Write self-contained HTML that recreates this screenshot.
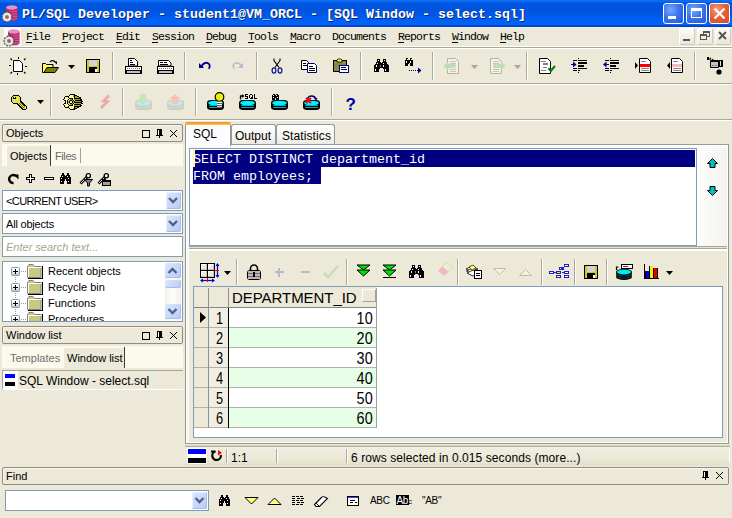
<!DOCTYPE html>
<html><head><meta charset="utf-8">
<style>
*{margin:0;padding:0;box-sizing:border-box}
html,body{width:732px;height:518px;overflow:hidden;background:#ECE9D8;font-family:"Liberation Sans",sans-serif;font-size:11px;color:#000}
.a{position:absolute;white-space:pre}
.mono{font-family:"Liberation Mono",monospace}
.t{position:absolute;white-space:pre;line-height:1}
</style></head><body>

<div class="a" style="left:0px;top:0px;width:732px;height:27px;background:linear-gradient(#0A6CF5 0px,#0A6CF5 1.5px,#0055DE 3px,#0053DC 6px,#0055E3 14px,#005EF4 18px,#0064FA 24.5px,#0A48D0 25.5px,#003CC4 27px);"></div>
<div class="a mono" style="left:22px;top:7px;font-size:13.34px;font-weight:bold;color:#fff;text-shadow:1px 1px 0 #0A246A;line-height:15px">PL/SQL Developer - student1@VM_ORCL - [SQL Window - select.sql]</div>
<div class="a" style="left:663px;top:3px;width:21px;height:21px;background:radial-gradient(circle at 35% 30%,#7AA8FA 0%,#3D75EE 45%,#2258DA 100%);border:1px solid #fff;border-radius:3px"></div>
<div class="a" style="left:668px;top:16px;width:8px;height:3px;background:#fff;"></div>
<div class="a" style="left:686px;top:3px;width:21px;height:21px;background:radial-gradient(circle at 35% 30%,#7AA8FA 0%,#3D75EE 45%,#2258DA 100%);border:1px solid #fff;border-radius:3px"></div>
<div class="a" style="left:691px;top:8px;width:11px;height:10px;background:transparent;border:1px solid #fff;border-top-width:3px"></div>
<div class="a" style="left:709px;top:3px;width:21px;height:21px;background:radial-gradient(circle at 35% 30%,#F2A080 0%,#E5603A 45%,#D04A22 100%);border:1px solid #fff;border-radius:3px"></div>
<div class="a" style="left:0px;top:27px;width:732px;height:1px;background:#F6F3E4;"></div>
<div class="a mono" style="left:26px;top:31px;font-size:11.5px;letter-spacing:-0.9px;line-height:12px">File</div>
<div class="a" style="left:26px;top:42px;width:6px;height:1px;background:#000;"></div>
<div class="a mono" style="left:62px;top:31px;font-size:11.5px;letter-spacing:-0.9px;line-height:12px">Project</div>
<div class="a" style="left:62px;top:42px;width:6px;height:1px;background:#000;"></div>
<div class="a mono" style="left:116px;top:31px;font-size:11.5px;letter-spacing:-0.9px;line-height:12px">Edit</div>
<div class="a" style="left:116px;top:42px;width:6px;height:1px;background:#000;"></div>
<div class="a mono" style="left:152px;top:31px;font-size:11.5px;letter-spacing:-0.9px;line-height:12px">Session</div>
<div class="a" style="left:152px;top:42px;width:6px;height:1px;background:#000;"></div>
<div class="a mono" style="left:206px;top:31px;font-size:11.5px;letter-spacing:-0.9px;line-height:12px">Debug</div>
<div class="a" style="left:206px;top:42px;width:6px;height:1px;background:#000;"></div>
<div class="a mono" style="left:248px;top:31px;font-size:11.5px;letter-spacing:-0.9px;line-height:12px">Tools</div>
<div class="a" style="left:248px;top:42px;width:6px;height:1px;background:#000;"></div>
<div class="a mono" style="left:290px;top:31px;font-size:11.5px;letter-spacing:-0.9px;line-height:12px">Macro</div>
<div class="a" style="left:290px;top:42px;width:6px;height:1px;background:#000;"></div>
<div class="a mono" style="left:332px;top:31px;font-size:11.5px;letter-spacing:-0.9px;line-height:12px">Documents</div>
<div class="a" style="left:338px;top:42px;width:6px;height:1px;background:#000;"></div>
<div class="a mono" style="left:398px;top:31px;font-size:11.5px;letter-spacing:-0.9px;line-height:12px">Reports</div>
<div class="a" style="left:398px;top:42px;width:6px;height:1px;background:#000;"></div>
<div class="a mono" style="left:452px;top:31px;font-size:11.5px;letter-spacing:-0.9px;line-height:12px">Window</div>
<div class="a" style="left:452px;top:42px;width:6px;height:1px;background:#000;"></div>
<div class="a mono" style="left:500px;top:31px;font-size:11.5px;letter-spacing:-0.9px;line-height:12px">Help</div>
<div class="a" style="left:500px;top:42px;width:6px;height:1px;background:#000;"></div>
<div class="a" style="left:679px;top:28px;width:16px;height:17px;background:linear-gradient(#FDFCF8,#E9E6D8);border:1px solid #fff;border-right-color:#CFCBBB;border-bottom-color:#CFCBBB;border-radius:2px"></div>
<div class="a" style="left:697px;top:28px;width:16px;height:17px;background:linear-gradient(#FDFCF8,#E9E6D8);border:1px solid #fff;border-right-color:#CFCBBB;border-bottom-color:#CFCBBB;border-radius:2px"></div>
<div class="a" style="left:715px;top:28px;width:16px;height:17px;background:linear-gradient(#FDFCF8,#E9E6D8);border:1px solid #fff;border-right-color:#CFCBBB;border-bottom-color:#CFCBBB;border-radius:2px"></div>
<div class="a" style="left:683px;top:39px;width:7px;height:2px;background:#555;"></div>
<div class="a" style="left:703px;top:31px;width:7px;height:6px;background:transparent;border:1px solid #555;border-top-width:2px"></div>
<div class="a" style="left:700px;top:34px;width:7px;height:6px;background:#F2F0E6;border:1px solid #555;border-top-width:2px"></div>
<div class="a" style="left:0px;top:46px;width:732px;height:1px;background:#fff;"></div>
<div class="a" style="left:0px;top:47px;width:732px;height:1px;background:#ACA899;"></div>
<div class="a" style="left:0px;top:48px;width:732px;height:1px;background:#fff;"></div>
<div class="a" style="left:0px;top:83px;width:732px;height:1px;background:#ACA899;"></div>
<div class="a" style="left:0px;top:84px;width:732px;height:1px;background:#fff;"></div>
<div class="a" style="left:0px;top:119px;width:732px;height:1px;background:#ACA899;"></div>
<div class="a" style="left:0px;top:120px;width:732px;height:1px;background:#fff;"></div>
<div class="a" style="left:112px;top:52px;width:1px;height:28px;background:#ACA899;"></div>
<div class="a" style="left:113px;top:52px;width:1px;height:28px;background:#fff;"></div>
<div class="a" style="left:184px;top:52px;width:1px;height:28px;background:#ACA899;"></div>
<div class="a" style="left:185px;top:52px;width:1px;height:28px;background:#fff;"></div>
<div class="a" style="left:256px;top:52px;width:1px;height:28px;background:#ACA899;"></div>
<div class="a" style="left:257px;top:52px;width:1px;height:28px;background:#fff;"></div>
<div class="a" style="left:360px;top:52px;width:1px;height:28px;background:#ACA899;"></div>
<div class="a" style="left:361px;top:52px;width:1px;height:28px;background:#fff;"></div>
<div class="a" style="left:432px;top:52px;width:1px;height:28px;background:#ACA899;"></div>
<div class="a" style="left:433px;top:52px;width:1px;height:28px;background:#fff;"></div>
<div class="a" style="left:526px;top:52px;width:1px;height:28px;background:#ACA899;"></div>
<div class="a" style="left:527px;top:52px;width:1px;height:28px;background:#fff;"></div>
<div class="a" style="left:694px;top:52px;width:1px;height:28px;background:#ACA899;"></div>
<div class="a" style="left:695px;top:52px;width:1px;height:28px;background:#fff;"></div>
<div class="a" style="left:50px;top:88px;width:1px;height:28px;background:#ACA899;"></div>
<div class="a" style="left:51px;top:88px;width:1px;height:28px;background:#fff;"></div>
<div class="a" style="left:122px;top:88px;width:1px;height:28px;background:#ACA899;"></div>
<div class="a" style="left:123px;top:88px;width:1px;height:28px;background:#fff;"></div>
<div class="a" style="left:195px;top:88px;width:1px;height:28px;background:#ACA899;"></div>
<div class="a" style="left:196px;top:88px;width:1px;height:28px;background:#fff;"></div>
<div class="a" style="left:331px;top:88px;width:1px;height:28px;background:#ACA899;"></div>
<div class="a" style="left:332px;top:88px;width:1px;height:28px;background:#fff;"></div>
<div class="a" style="left:2px;top:124px;width:181px;height:18px;background:#ECE9D8;border:1px solid #8F8D80;border-radius:2px;box-shadow:inset 1px 1px 0 #F8F6EE"></div>
<div class="t" style="left:6px;top:128px;font-size:11px;color:#000;">Objects</div>
<div class="a" style="left:2px;top:144px;width:181px;height:22px;background:#FCFAEC;"></div>
<div class="a" style="left:7px;top:146px;width:43px;height:20px;background:#ECE9D8;"></div>
<div class="a" style="left:50px;top:145px;width:1px;height:21px;background:#3C3C3C;"></div>
<div class="t" style="left:10px;top:151px;font-size:11px;color:#000;">Objects</div>
<div class="t" style="left:55px;top:151px;font-size:11px;color:#6A6A6A;letter-spacing:-0.4px">Files</div>
<div class="a" style="left:80px;top:148px;width:1px;height:15px;background:#A0A0A0;"></div>
<div class="a" style="left:2px;top:190px;width:181px;height:21px;background:#fff;border:1px solid #7F9DB9"></div>
<div class="a" style="left:166px;top:192px;width:15px;height:17px;background:linear-gradient(135deg,#DCE6FD,#B7CBF6);border-radius:2px;box-shadow:inset -1px -1px 0 #A8BDEB, inset 1px 1px 0 #EAF0FE"></div>
<div class="t" style="left:6px;top:196px;font-size:11px;color:#000;"><span style="letter-spacing:-0.6px">&lt;CURRENT USER&gt;</span></div>
<div class="a" style="left:2px;top:213px;width:181px;height:21px;background:#fff;border:1px solid #7F9DB9"></div>
<div class="a" style="left:166px;top:215px;width:15px;height:17px;background:linear-gradient(135deg,#DCE6FD,#B7CBF6);border-radius:2px;box-shadow:inset -1px -1px 0 #A8BDEB, inset 1px 1px 0 #EAF0FE"></div>
<div class="t" style="left:6px;top:219px;font-size:11px;color:#000;"><span style="letter-spacing:-0.2px">All objects</span></div>
<div class="a" style="left:2px;top:236px;width:181px;height:21px;background:#fff;border:1px solid #7F9DB9"></div>
<div class="t" style="left:6px;top:242px;font-size:11px;color:#A7A38E;font-style:italic;">Enter search text...</div>
<div class="a" style="left:2px;top:261px;width:181px;height:61px;background:#fff;border:1px solid #7F9DB9"></div>
<div class="a" style="left:3px;top:262px;width:162px;height:59px;overflow:hidden">
<div class="t" style="left:45px;top:4px;font-size:11px;color:#000;">Recent objects</div>
<div class="t" style="left:45px;top:20px;font-size:11px;color:#000;">Recycle bin</div>
<div class="t" style="left:45px;top:36px;font-size:11px;color:#000;">Functions</div>
<div class="t" style="left:45px;top:52px;font-size:11px;color:#000;">Procedures</div>
</div>
<div class="a" style="left:165px;top:263px;width:16px;height:57px;background:linear-gradient(90deg,#F3F1EC,#FDFDFB 50%,#F0EFE8);"></div>
<div class="a" style="left:165px;top:263px;width:16px;height:15px;background:linear-gradient(135deg,#DCE6FD,#B7CBF6);border-radius:2px;box-shadow:inset -1px -1px 0 #A8BDEB"></div>
<div class="a" style="left:165px;top:280px;width:16px;height:8px;background:linear-gradient(135deg,#DCE6FD,#B7CBF6);border-radius:2px;box-shadow:inset -1px -1px 0 #A8BDEB"></div>
<div class="a" style="left:165px;top:304px;width:16px;height:15px;background:linear-gradient(135deg,#DCE6FD,#B7CBF6);border-radius:2px;box-shadow:inset -1px -1px 0 #A8BDEB"></div>
<div class="a" style="left:2px;top:326px;width:181px;height:18px;background:#ECE9D8;border:1px solid #8F8D80;border-radius:2px;box-shadow:inset 1px 1px 0 #F8F6EE"></div>
<div class="t" style="left:6px;top:330px;font-size:11px;color:#000;">Window list</div>
<div class="a" style="left:2px;top:346px;width:181px;height:22px;background:#FCFAEC;"></div>
<div class="a" style="left:64px;top:348px;width:60px;height:20px;background:#ECE9D8;"></div>
<div class="a" style="left:124px;top:347px;width:1px;height:21px;background:#3C3C3C;"></div>
<div class="t" style="left:10px;top:353px;font-size:11px;color:#707070;">Templates</div>
<div class="t" style="left:67px;top:353px;font-size:11px;color:#000;">Window list</div>
<div class="a" style="left:2px;top:370px;width:181px;height:20px;background:#ECE9D8;border-top:1px solid #A8A595;border-left:1px solid #A8A595;border-bottom:1px solid #fff"></div>
<div class="a" style="left:3px;top:371px;width:15px;height:18px;background:#fff;"></div>
<div class="t" style="left:19px;top:375px;font-size:12px;color:#000;">SQL Window - select.sql</div>
<div class="a" style="left:231px;top:124px;width:45px;height:21px;background:linear-gradient(#FFFFFF,#F3F2EC 70%,#E9E8E0);border:1px solid #919B9C;border-bottom:none;border-radius:3px 3px 0 0"></div>
<div class="a" style="left:276px;top:124px;width:59px;height:21px;background:linear-gradient(#FFFFFF,#F3F2EC 70%,#E9E8E0);border:1px solid #919B9C;border-bottom:none;border-radius:3px 3px 0 0"></div>
<div class="a" style="left:185px;top:144px;width:544px;height:300px;background:#F9F9FA;border:1px solid #919B9C;box-shadow:inset 1px 1px 0 #fff, inset -1px -1px 0 #fff"></div>
<div class="a" style="left:189px;top:251px;width:538px;height:191px;background:#ECE9D8;"></div>
<div class="a" style="left:185px;top:122px;width:46px;height:24px;background:#FCFCFE;border:1px solid #919B9C;border-bottom:none;border-radius:3px 3px 0 0"></div>
<div class="a" style="left:185px;top:122px;width:46px;height:3px;background:linear-gradient(#E68B2C,#FFC73C);border-radius:3px 3px 0 0"></div>
<div class="t" style="left:193px;top:128px;font-size:12px;color:#000;">SQL</div>
<div class="t" style="left:235px;top:130px;font-size:12px;color:#000;">Output</div>
<div class="t" style="left:282px;top:130px;font-size:12px;color:#000;letter-spacing:0.1px">Statistics</div>
<div class="a" style="left:189px;top:148px;width:508px;height:98px;background:#fff;border:1px solid #7F9DB9"></div>
<div class="a" style="left:697px;top:148px;width:30px;height:98px;background:linear-gradient(90deg,#FDFDFC,#F3F2EE);"></div>
<div class="a" style="left:193px;top:150px;width:502px;height:17px;background:#000080;"></div>
<div class="a" style="left:193px;top:167px;width:128px;height:17px;background:#000080;"></div>
<div class="a" style="left:193px;top:150px;width:2px;height:17px;background:#FFFF80;"></div>
<div class="a mono" style="left:193px;top:151px;font-size:13.34px;line-height:17px;color:#fff">SELECT DISTINCT department_id
FROM employees;</div>
<div class="a" style="left:189px;top:246px;width:538px;height:1px;background:#A9A593;"></div>
<div class="a" style="left:189px;top:247px;width:538px;height:1px;background:#E4E2D6;"></div>
<div class="a" style="left:189px;top:248px;width:538px;height:1px;background:#A9A593;"></div>
<div class="a" style="left:189px;top:249px;width:538px;height:2px;background:#fff;"></div>
<div class="a" style="left:193px;top:286px;width:530px;height:152px;background:#fff;border:1px solid #7F9DB9"></div>
<div class="a" style="left:194px;top:287px;width:183px;height:21px;background:#ECE9D8;"></div>
<div class="a" style="left:194px;top:308px;width:35px;height:120px;background:#ECE9D8;"></div>
<div class="a" style="left:209px;top:308px;width:19px;height:120px;background:#F1EFE4;"></div>
<div class="a" style="left:229px;top:308px;width:147px;height:19px;background:#fff;"></div>
<div class="a" style="left:194px;top:327px;width:183px;height:1px;background:#B0B0B0;"></div>
<div class="t" style="left:210px;width:19px;text-align:center;top:311px;font-size:16px;transform:scaleX(0.8)">1</div>
<div class="t" style="left:229px;width:144px;text-align:right;top:311px;font-size:16px;transform:scaleX(0.9);transform-origin:100% 0;letter-spacing:0.3px">10</div>
<div class="a" style="left:229px;top:328px;width:147px;height:19px;background:#E6FFE6;"></div>
<div class="a" style="left:194px;top:347px;width:183px;height:1px;background:#B0B0B0;"></div>
<div class="t" style="left:210px;width:19px;text-align:center;top:331px;font-size:16px;transform:scaleX(0.8)">2</div>
<div class="t" style="left:229px;width:144px;text-align:right;top:331px;font-size:16px;transform:scaleX(0.9);transform-origin:100% 0;letter-spacing:0.3px">20</div>
<div class="a" style="left:229px;top:348px;width:147px;height:19px;background:#fff;"></div>
<div class="a" style="left:194px;top:367px;width:183px;height:1px;background:#B0B0B0;"></div>
<div class="t" style="left:210px;width:19px;text-align:center;top:351px;font-size:16px;transform:scaleX(0.8)">3</div>
<div class="t" style="left:229px;width:144px;text-align:right;top:351px;font-size:16px;transform:scaleX(0.9);transform-origin:100% 0;letter-spacing:0.3px">30</div>
<div class="a" style="left:229px;top:368px;width:147px;height:19px;background:#E6FFE6;"></div>
<div class="a" style="left:194px;top:387px;width:183px;height:1px;background:#B0B0B0;"></div>
<div class="t" style="left:210px;width:19px;text-align:center;top:371px;font-size:16px;transform:scaleX(0.8)">4</div>
<div class="t" style="left:229px;width:144px;text-align:right;top:371px;font-size:16px;transform:scaleX(0.9);transform-origin:100% 0;letter-spacing:0.3px">40</div>
<div class="a" style="left:229px;top:388px;width:147px;height:19px;background:#fff;"></div>
<div class="a" style="left:194px;top:407px;width:183px;height:1px;background:#B0B0B0;"></div>
<div class="t" style="left:210px;width:19px;text-align:center;top:391px;font-size:16px;transform:scaleX(0.8)">5</div>
<div class="t" style="left:229px;width:144px;text-align:right;top:391px;font-size:16px;transform:scaleX(0.9);transform-origin:100% 0;letter-spacing:0.3px">50</div>
<div class="a" style="left:229px;top:408px;width:147px;height:19px;background:#E6FFE6;"></div>
<div class="a" style="left:194px;top:427px;width:183px;height:1px;background:#B0B0B0;"></div>
<div class="t" style="left:210px;width:19px;text-align:center;top:411px;font-size:16px;transform:scaleX(0.8)">6</div>
<div class="t" style="left:229px;width:144px;text-align:right;top:411px;font-size:16px;transform:scaleX(0.9);transform-origin:100% 0;letter-spacing:0.3px">60</div>
<div class="a" style="left:194px;top:307px;width:183px;height:1px;background:#858585;"></div>
<div class="a" style="left:208px;top:288px;width:1px;height:140px;background:#909090;"></div>
<div class="a" style="left:228px;top:288px;width:1px;height:20px;background:#909090;"></div>
<div class="a" style="left:228px;top:308px;width:1px;height:120px;background:#000;"></div>
<div class="a" style="left:376px;top:288px;width:1px;height:140px;background:#A0A0A0;"></div>
<div class="a" style="left:362px;top:289px;width:14px;height:13px;background:#ECE9D8;border:1px solid;border-color:#fff #A0A0A0 #A0A0A0 #fff"></div>
<div class="t" style="left:232px;top:290px;font-size:15px;color:#000;letter-spacing:-0.05px">DEPARTMENT_ID</div>
<div class="a" style="left:185px;top:445px;width:545px;height:1px;background:#D6D3C2;"></div>
<div class="a" style="left:185px;top:446px;width:545px;height:1px;background:#B8B4A2;"></div>
<div class="a" style="left:185px;top:447px;width:545px;height:19px;background:linear-gradient(#F0EEE2,#ECE9D8 60%,#E2DFCC);"></div>
<div class="a" style="left:226px;top:449px;width:1px;height:14px;background:#ACA899;"></div>
<div class="a" style="left:227px;top:449px;width:1px;height:14px;background:#fff;"></div>
<div class="a" style="left:276px;top:449px;width:1px;height:14px;background:#ACA899;"></div>
<div class="a" style="left:277px;top:449px;width:1px;height:14px;background:#fff;"></div>
<div class="a" style="left:346px;top:449px;width:1px;height:14px;background:#ACA899;"></div>
<div class="a" style="left:347px;top:449px;width:1px;height:14px;background:#fff;"></div>
<div class="a" style="left:729px;top:449px;width:1px;height:14px;background:#fff;"></div>
<div class="t" style="left:231px;top:452px;font-size:12px;color:#000;">1:1</div>
<div class="t" style="left:351px;top:452px;font-size:12px;color:#000;letter-spacing:0.08px">6 rows selected in 0.015 seconds (more...)</div>
<div class="a" style="left:187px;top:448px;width:20px;height:16px;background:#fff;"></div>
<div class="a" style="left:188px;top:449px;width:18px;height:5px;background:#0000FF;"></div>
<div class="a" style="left:188px;top:458px;width:18px;height:5px;background:#000;"></div>
<div class="a" style="left:2px;top:467px;width:727px;height:18px;background:#ECE9D8;border:1px solid #8F8D80;border-radius:2px;box-shadow:inset 1px 1px 0 #F8F6EE"></div>
<div class="t" style="left:6px;top:471px;font-size:11px;color:#000;">Find</div>
<div class="a" style="left:5px;top:490px;width:204px;height:21px;background:#fff;border:1px solid #7F9DB9"></div>
<div class="a" style="left:192px;top:492px;width:15px;height:17px;background:linear-gradient(135deg,#DCE6FD,#B7CBF6);border-radius:2px;box-shadow:inset -1px -1px 0 #A8BDEB, inset 1px 1px 0 #EAF0FE"></div>
<div class="t" style="left:9px;top:496px;font-size:11px;color:#000;"></div>
<svg class="a" style="left:0;top:0" width="732" height="518" viewBox="0 0 732 518"><path d="M13.5 60.5H19.5L22.5 63.5V71.5H13.5Z" fill="#fff" stroke="#000" stroke-width="1" /><rect x="18" y="57" width="1" height="2" fill="#000"/><rect x="17" y="73" width="1" height="2" fill="#000"/><rect x="9" y="65" width="2" height="1" fill="#000"/><rect x="25" y="66" width="2" height="1" fill="#000"/><path d="M10.5 58.5l1.5 1.5M25.5 58.5l-1.5 1.5M10.5 73.5l1.5 -1.5M25.5 73.5l-1.5 -1.5" fill="none" stroke="#000" stroke-width="1.2" /><path d="M42.5 63.5h3l1 1h6.5v8h-10.5z" fill="#FFFF60" stroke="#000" stroke-width="1" /><path d="M44 72.5l3-5h11.5l-3.5 5z" fill="#808000" stroke="#000" stroke-width="1" /><path d="M50 62c1-2 4-2 5.5 0.5" fill="none" stroke="#000" stroke-width="1.2" /><path d="M54 61.5h3v3z" fill="#000" stroke="none" stroke-width="1" /><path d="M68 65h7l-3.5 4z" fill="#000" stroke="none" stroke-width="1" /><rect x="86" y="59" width="14" height="14" fill="#000"/><rect x="87" y="60" width="2" height="12" fill="#C8C830"/><rect x="97" y="60" width="2" height="12" fill="#C8C830"/><rect x="89" y="60" width="8" height="6" fill="#D8D0D0"/><rect x="89" y="66" width="8" height="1" fill="#C8C830"/><rect x="95" y="69" width="2" height="3" fill="#fff"/><rect x="98" y="60" width="1" height="1" fill="#fff"/><path d="M128.5 58.5h6l3 3v4.5h-9z" fill="#fff" stroke="#000" stroke-width="1" /><rect x="130" y="60" width="2" height="1" fill="#000"/><rect x="130" y="62" width="3" height="1" fill="#000"/><rect x="130" y="64" width="5" height="1" fill="#000"/><rect x="125" y="66" width="17" height="8" fill="#000"/><rect x="126" y="67" width="15" height="3" fill="#fff"/><rect x="127" y="68" width="1" height="1" fill="#777"/><rect x="129" y="68" width="1" height="1" fill="#777"/><rect x="131" y="68" width="1" height="1" fill="#777"/><rect x="133" y="68" width="1" height="1" fill="#777"/><rect x="135" y="68" width="1" height="1" fill="#777"/><rect x="137" y="68" width="1" height="1" fill="#777"/><rect x="139" y="68" width="1" height="1" fill="#777"/><rect x="139" y="68" width="1" height="1" fill="#f00"/><rect x="127" y="71" width="13" height="2" fill="#C0C0C0"/><path d="M158.5 60.5h10l2.5 2.5v3h-12.5z" fill="#fff" stroke="#000" stroke-width="1" /><rect x="160" y="62" width="3" height="1" fill="#000"/><rect x="164" y="62" width="3" height="1" fill="#000"/><rect x="160" y="64" width="8" height="1" fill="#000"/><rect x="157" y="66" width="17" height="8" fill="#000"/><rect x="158" y="67" width="15" height="3" fill="#fff"/><rect x="159" y="68" width="1" height="1" fill="#777"/><rect x="161" y="68" width="1" height="1" fill="#777"/><rect x="163" y="68" width="1" height="1" fill="#777"/><rect x="165" y="68" width="1" height="1" fill="#777"/><rect x="167" y="68" width="1" height="1" fill="#777"/><rect x="169" y="68" width="1" height="1" fill="#777"/><rect x="171" y="68" width="1" height="1" fill="#777"/><rect x="171" y="68" width="1" height="1" fill="#f00"/><rect x="159" y="71" width="13" height="2" fill="#C0C0C0"/><path d="M201.5 67.5C202 63 207 61.5 209 64 210.5 66 209.5 68 208.5 68.5" fill="none" stroke="#000080" stroke-width="1.8" /><path d="M199 63v5h5z" fill="#000080" stroke="none" stroke-width="1" /><path d="M241.5 67.5C241 63 236 61.5 234 64 232.5 66 233.5 68 234.5 68.5" fill="none" stroke="#B8B8C8" stroke-width="1.6" /><path d="M243 63v5h-5z" fill="#B8B8C8" stroke="none" stroke-width="1" /><path d="M274 58.5v2l5 7M280 58.5v2l-5 7" fill="none" stroke="#000" stroke-width="1.1" /><ellipse cx="274" cy="70.5" rx="1.9" ry="2.6" fill="none" stroke="#1010A0" stroke-width="1.2"/><ellipse cx="280" cy="70.5" rx="1.9" ry="2.6" fill="none" stroke="#1010A0" stroke-width="1.2"/><path d="M301.5 60.5H306.5L308.5 62.5V69.5H301.5Z" fill="#fff" stroke="#000" stroke-width="1" /><rect x="303" y="63" width="3" height="1" fill="#000"/><rect x="303" y="65" width="4" height="1" fill="#000"/><path d="M307.5 63.5H314.5L316.5 65.5V72.5H307.5Z" fill="#fff" stroke="#000080" stroke-width="1" /><rect x="309" y="66" width="4" height="1" fill="#000"/><rect x="309" y="68" width="6" height="1" fill="#000"/><rect x="309" y="70" width="6" height="1" fill="#000"/><rect x="333" y="60" width="14" height="12" fill="#000"/><rect x="334" y="61" width="12" height="10" fill="#8C8A40"/><path d="M337 62v-2l1-1h3l1 1v2z" fill="#FFFF40" stroke="#000" stroke-width="0.8" /><rect x="339" y="65" width="10" height="8" fill="#000080"/><rect x="340" y="66" width="8" height="6" fill="#fff"/><rect x="341" y="67" width="5" height="1" fill="#000080"/><rect x="341" y="69" width="6" height="1" fill="#000080"/><rect x="377" y="59" width="3" height="1" fill="#000"/><rect x="383" y="59" width="3" height="1" fill="#000"/><rect x="377" y="60" width="1" height="1" fill="#000"/><rect x="378" y="60" width="1" height="1" fill="#fff"/><rect x="379" y="60" width="1" height="1" fill="#000"/><rect x="383" y="60" width="1" height="1" fill="#000"/><rect x="384" y="60" width="1" height="1" fill="#fff"/><rect x="385" y="60" width="1" height="1" fill="#000"/><rect x="377" y="61" width="3" height="1" fill="#000"/><rect x="383" y="61" width="3" height="1" fill="#000"/><rect x="376" y="62" width="5" height="1" fill="#000"/><rect x="382" y="62" width="5" height="1" fill="#000"/><rect x="376" y="63" width="1" height="1" fill="#000"/><rect x="377" y="63" width="1" height="1" fill="#fff"/><rect x="378" y="63" width="5" height="1" fill="#000"/><rect x="383" y="63" width="1" height="1" fill="#fff"/><rect x="384" y="63" width="3" height="1" fill="#000"/><rect x="375" y="64" width="13" height="1" fill="#000"/><rect x="374" y="65" width="2" height="1" fill="#000"/><rect x="376" y="65" width="1" height="1" fill="#fff"/><rect x="377" y="65" width="3" height="1" fill="#000"/><rect x="380" y="65" width="1" height="1" fill="#888"/><rect x="381" y="65" width="2" height="1" fill="#000"/><rect x="383" y="65" width="1" height="1" fill="#fff"/><rect x="384" y="65" width="5" height="1" fill="#000"/><rect x="374" y="66" width="2" height="1" fill="#000"/><rect x="376" y="66" width="1" height="1" fill="#fff"/><rect x="377" y="66" width="3" height="1" fill="#000"/><rect x="380" y="66" width="1" height="1" fill="#888"/><rect x="381" y="66" width="2" height="1" fill="#000"/><rect x="383" y="66" width="1" height="1" fill="#fff"/><rect x="384" y="66" width="5" height="1" fill="#000"/><rect x="374" y="67" width="15" height="1" fill="#000"/><rect x="374" y="68" width="6" height="1" fill="#000"/><rect x="383" y="68" width="6" height="1" fill="#000"/><rect x="374" y="69" width="1" height="1" fill="#000"/><rect x="375" y="69" width="1" height="1" fill="#fff"/><rect x="376" y="69" width="3" height="1" fill="#000"/><rect x="384" y="69" width="1" height="1" fill="#000"/><rect x="385" y="69" width="1" height="1" fill="#fff"/><rect x="386" y="69" width="3" height="1" fill="#000"/><rect x="374" y="70" width="1" height="1" fill="#000"/><rect x="375" y="70" width="1" height="1" fill="#fff"/><rect x="376" y="70" width="3" height="1" fill="#000"/><rect x="384" y="70" width="1" height="1" fill="#000"/><rect x="385" y="70" width="1" height="1" fill="#fff"/><rect x="386" y="70" width="3" height="1" fill="#000"/><rect x="374" y="71" width="5" height="1" fill="#000"/><rect x="384" y="71" width="5" height="1" fill="#000"/><rect x="406" y="58" width="2" height="1" fill="#000"/><rect x="410" y="58" width="2" height="1" fill="#000"/><rect x="406" y="59" width="1" height="1" fill="#000"/><rect x="407" y="59" width="1" height="1" fill="#fff"/><rect x="410" y="59" width="1" height="1" fill="#000"/><rect x="411" y="59" width="1" height="1" fill="#fff"/><rect x="405" y="60" width="8" height="1" fill="#000"/><rect x="405" y="61" width="1" height="1" fill="#000"/><rect x="406" y="61" width="1" height="1" fill="#fff"/><rect x="407" y="61" width="3" height="1" fill="#000"/><rect x="410" y="61" width="1" height="1" fill="#fff"/><rect x="411" y="61" width="2" height="1" fill="#000"/><rect x="405" y="62" width="1" height="1" fill="#000"/><rect x="406" y="62" width="1" height="1" fill="#fff"/><rect x="407" y="62" width="3" height="1" fill="#000"/><rect x="410" y="62" width="1" height="1" fill="#fff"/><rect x="411" y="62" width="2" height="1" fill="#000"/><rect x="405" y="63" width="4" height="1" fill="#000"/><rect x="410" y="63" width="3" height="1" fill="#000"/><rect x="405" y="64" width="3" height="1" fill="#000"/><rect x="410" y="64" width="3" height="1" fill="#000"/><rect x="405" y="65" width="3" height="1" fill="#000"/><rect x="410" y="65" width="3" height="1" fill="#000"/><rect x="409" y="70" width="1" height="1" fill="#000080"/><rect x="411" y="70" width="1" height="1" fill="#000080"/><rect x="413" y="70" width="1" height="1" fill="#000080"/><rect x="415" y="70" width="1" height="1" fill="#000080"/><rect x="417" y="70" width="4" height="1" fill="#000080"/><path d="M418 67.5l3.5 3 -3.5 3z" fill="#000080" stroke="none" stroke-width="1" /><path d="M447.5 58.5h8l3 3v12h-11z" fill="#F4F2EA" stroke="#B5B19E" stroke-width="1" /><rect x="450" y="61" width="6" height="1" fill="#C8C4B2"/><rect x="450" y="63" width="6" height="1" fill="#C8C4B2"/><rect x="450" y="65" width="6" height="1" fill="#C8C4B2"/><rect x="450" y="69" width="6" height="1" fill="#C8C4B2"/><rect x="450" y="71" width="6" height="1" fill="#C8C4B2"/><path d="M443.5 66l5-5v3h7v4h-7v3z" fill="#BFDDB4" stroke="none" stroke-width="1" /><path d="M490.5 58.5h8l3 3v12h-11z" fill="#F4F2EA" stroke="#B5B19E" stroke-width="1" /><rect x="493" y="61" width="6" height="1" fill="#C8C4B2"/><rect x="493" y="63" width="6" height="1" fill="#C8C4B2"/><rect x="493" y="65" width="6" height="1" fill="#C8C4B2"/><rect x="493" y="69" width="6" height="1" fill="#C8C4B2"/><rect x="493" y="71" width="6" height="1" fill="#C8C4B2"/><path d="M505.5 66l-5-5v3h-7v4h7v3z" fill="#BFDDB4" stroke="none" stroke-width="1" /><path d="M471 65h7l-3.5 4z" fill="#A9A594" stroke="none" stroke-width="1" /><path d="M514 65h7l-3.5 4z" fill="#A9A594" stroke="none" stroke-width="1" /><path d="M539.5 58.5H547.5L550.5 61.5V73.5H539.5Z" fill="#fff" stroke="#000" stroke-width="1" /><rect x="541" y="61" width="5" height="1" fill="#808080"/><rect x="543" y="63" width="5" height="1" fill="#808080"/><rect x="543" y="64" width="5" height="1" fill="#808080"/><rect x="543" y="67" width="4" height="1" fill="#808080"/><rect x="541" y="70" width="5" height="1" fill="#808080"/><path d="M548.3 68.3l2.5 2.7 4.2-5" fill="none" stroke="#008000" stroke-width="2" /><rect x="578" y="58" width="1" height="1" fill="#000"/><rect x="578" y="72" width="1" height="1" fill="#000"/><rect x="573" y="60" width="4" height="1" fill="#000"/><rect x="578" y="60" width="9" height="1" fill="#000"/><rect x="578" y="62" width="9" height="2" fill="#000"/><rect x="578" y="65" width="6" height="2" fill="#000"/><rect x="573" y="68" width="4" height="1" fill="#000"/><rect x="578" y="68" width="9" height="1" fill="#000"/><rect x="573" y="70" width="4" height="1" fill="#000"/><rect x="578" y="70" width="2" height="1" fill="#000"/><rect x="571" y="64" width="3" height="1" fill="#000080"/><path d="M573 61.5l3.5 3 -3.5 3z" fill="#000080" stroke="none" stroke-width="1" /><rect x="610" y="58" width="1" height="1" fill="#000"/><rect x="610" y="72" width="1" height="1" fill="#000"/><rect x="605" y="60" width="4" height="1" fill="#000"/><rect x="610" y="60" width="9" height="1" fill="#000"/><rect x="610" y="62" width="9" height="2" fill="#000"/><rect x="610" y="65" width="6" height="2" fill="#000"/><rect x="605" y="68" width="4" height="1" fill="#000"/><rect x="610" y="68" width="9" height="1" fill="#000"/><rect x="605" y="70" width="4" height="1" fill="#000"/><rect x="610" y="70" width="2" height="1" fill="#000"/><rect x="606" y="64" width="3" height="1" fill="#000080"/><path d="M606.5 61.5l-3.5 3 3.5 3z" fill="#000080" stroke="none" stroke-width="1" /><path d="M639.5 58.5H647.5L650.5 61.5V72.5H639.5Z" fill="#fff" stroke="#000" stroke-width="1" /><rect x="641" y="61" width="5" height="1" fill="#888"/><rect x="640" y="64" width="10" height="3" fill="#FF0000"/><rect x="641" y="68" width="8" height="1" fill="#888"/><rect x="641" y="70" width="8" height="1" fill="#888"/><path d="M635 62l3 3.5 -3 3.5z" fill="#000" stroke="none" stroke-width="1" /><path d="M671.5 58.5H679.5L682.5 61.5V72.5H671.5Z" fill="#fff" stroke="#000" stroke-width="1" /><rect x="673" y="61" width="5" height="1" fill="#888"/><rect x="672" y="64" width="10" height="3" fill="#F4BBBB"/><rect x="673" y="68" width="8" height="1" fill="#888"/><rect x="673" y="70" width="8" height="1" fill="#888"/><path d="M670 62l-3 3.5 3 3.5z" fill="#000" stroke="none" stroke-width="1" /><rect x="707" y="57" width="2" height="3" fill="#000"/><path d="M709.5 58.5l7 3.5" fill="none" stroke="#000" stroke-width="2" stroke-dasharray="1.5 1"/><rect x="710" y="60" width="9" height="8" rx="1" fill="#000"/><rect x="711" y="62" width="7" height="5" fill="#C4C4C4"/><rect x="712" y="65" width="2" height="1" fill="#808080"/><rect x="715" y="65" width="2" height="1" fill="#808080"/><rect x="719" y="60" width="4" height="7" fill="#000"/><rect x="720" y="61" width="1" height="5" fill="#E0E0E0"/><circle cx="719" cy="72" r="2.6" fill="#000"/><rect x="13" y="95" width="6" height="1" fill="#000"/><rect x="12" y="96" width="1" height="1" fill="#000"/><rect x="13" y="96" width="6" height="1" fill="#E4E450"/><rect x="19" y="96" width="1" height="1" fill="#000"/><rect x="11" y="97" width="1" height="1" fill="#000"/><rect x="12" y="97" width="1" height="1" fill="#E4E450"/><rect x="13" y="97" width="1" height="1" fill="#000"/><rect x="14" y="97" width="1" height="1" fill="#fff"/><rect x="15" y="97" width="1" height="1" fill="#000"/><rect x="16" y="97" width="4" height="1" fill="#E4E450"/><rect x="20" y="97" width="1" height="1" fill="#000"/><rect x="11" y="98" width="1" height="1" fill="#000"/><rect x="12" y="98" width="1" height="1" fill="#E4E450"/><rect x="13" y="98" width="3" height="1" fill="#000"/><rect x="16" y="98" width="4" height="1" fill="#E4E450"/><rect x="20" y="98" width="1" height="1" fill="#000"/><rect x="11" y="99" width="1" height="1" fill="#000"/><rect x="12" y="99" width="8" height="1" fill="#E4E450"/><rect x="20" y="99" width="1" height="1" fill="#000"/><rect x="11" y="100" width="1" height="1" fill="#000"/><rect x="12" y="100" width="8" height="1" fill="#E4E450"/><rect x="20" y="100" width="1" height="1" fill="#000"/><rect x="11" y="101" width="1" height="1" fill="#000"/><rect x="12" y="101" width="8" height="1" fill="#E4E450"/><rect x="20" y="101" width="2" height="1" fill="#000"/><rect x="12" y="102" width="1" height="1" fill="#000"/><rect x="13" y="102" width="7" height="1" fill="#E4E450"/><rect x="20" y="102" width="1" height="1" fill="#6A6A10"/><rect x="21" y="102" width="2" height="1" fill="#000"/><rect x="13" y="103" width="5" height="1" fill="#000"/><rect x="18" y="103" width="1" height="1" fill="#E4E450"/><rect x="19" y="103" width="1" height="1" fill="#6A6A10"/><rect x="20" y="103" width="1" height="1" fill="#E4E450"/><rect x="21" y="103" width="1" height="1" fill="#6A6A10"/><rect x="22" y="103" width="2" height="1" fill="#000"/><rect x="17" y="104" width="2" height="1" fill="#000"/><rect x="19" y="104" width="1" height="1" fill="#E4E450"/><rect x="20" y="104" width="1" height="1" fill="#6A6A10"/><rect x="21" y="104" width="1" height="1" fill="#E4E450"/><rect x="22" y="104" width="1" height="1" fill="#6A6A10"/><rect x="23" y="104" width="2" height="1" fill="#000"/><rect x="18" y="105" width="2" height="1" fill="#000"/><rect x="20" y="105" width="1" height="1" fill="#E4E450"/><rect x="21" y="105" width="1" height="1" fill="#6A6A10"/><rect x="22" y="105" width="1" height="1" fill="#E4E450"/><rect x="23" y="105" width="1" height="1" fill="#6A6A10"/><rect x="24" y="105" width="2" height="1" fill="#000"/><rect x="19" y="106" width="2" height="1" fill="#000"/><rect x="21" y="106" width="1" height="1" fill="#E4E450"/><rect x="22" y="106" width="1" height="1" fill="#6A6A10"/><rect x="23" y="106" width="1" height="1" fill="#E4E450"/><rect x="24" y="106" width="1" height="1" fill="#6A6A10"/><rect x="25" y="106" width="1" height="1" fill="#E4E450"/><rect x="26" y="106" width="1" height="1" fill="#000"/><rect x="20" y="107" width="2" height="1" fill="#000"/><rect x="22" y="107" width="1" height="1" fill="#E4E450"/><rect x="23" y="107" width="1" height="1" fill="#6A6A10"/><rect x="24" y="107" width="2" height="1" fill="#E4E450"/><rect x="26" y="107" width="1" height="1" fill="#000"/><rect x="21" y="108" width="2" height="1" fill="#000"/><rect x="23" y="108" width="3" height="1" fill="#E4E450"/><rect x="26" y="108" width="1" height="1" fill="#000"/><rect x="22" y="109" width="4" height="1" fill="#000"/><path d="M37 100h7l-3.5 4z" fill="#000" stroke="none" stroke-width="1" /><rect x="70" y="94" width="5" height="1" fill="#000"/><rect x="69" y="95" width="1" height="1" fill="#000"/><rect x="70" y="95" width="3" height="1" fill="#FFFF9A"/><rect x="73" y="95" width="1" height="1" fill="#A0A030"/><rect x="74" y="95" width="3" height="1" fill="#000"/><rect x="65" y="96" width="4" height="1" fill="#000"/><rect x="69" y="96" width="4" height="1" fill="#FFFF9A"/><rect x="73" y="96" width="1" height="1" fill="#A0A030"/><rect x="74" y="96" width="1" height="1" fill="#000"/><rect x="75" y="96" width="2" height="1" fill="#A0A030"/><rect x="77" y="96" width="2" height="1" fill="#000"/><rect x="64" y="97" width="1" height="1" fill="#000"/><rect x="65" y="97" width="3" height="1" fill="#FFFF9A"/><rect x="68" y="97" width="1" height="1" fill="#000"/><rect x="69" y="97" width="5" height="1" fill="#FFFF9A"/><rect x="74" y="97" width="1" height="1" fill="#000"/><rect x="75" y="97" width="4" height="1" fill="#A0A030"/><rect x="79" y="97" width="2" height="1" fill="#000"/><rect x="64" y="98" width="1" height="1" fill="#000"/><rect x="65" y="98" width="4" height="1" fill="#FFFF9A"/><rect x="69" y="98" width="4" height="1" fill="#000"/><rect x="73" y="98" width="1" height="1" fill="#FFFF9A"/><rect x="74" y="98" width="7" height="1" fill="#000"/><rect x="63" y="99" width="1" height="1" fill="#000"/><rect x="64" y="99" width="4" height="1" fill="#FFFF9A"/><rect x="68" y="99" width="1" height="1" fill="#000"/><rect x="69" y="99" width="1" height="1" fill="#FFFF9A"/><rect x="70" y="99" width="2" height="1" fill="#A0A030"/><rect x="72" y="99" width="1" height="1" fill="#000"/><rect x="73" y="99" width="1" height="1" fill="#FFFF9A"/><rect x="74" y="99" width="6" height="1" fill="#A0A030"/><rect x="80" y="99" width="2" height="1" fill="#000"/><rect x="64" y="100" width="2" height="1" fill="#000"/><rect x="66" y="100" width="1" height="1" fill="#FFFF9A"/><rect x="67" y="100" width="1" height="1" fill="#000"/><rect x="68" y="100" width="1" height="1" fill="#FFFF9A"/><rect x="69" y="100" width="1" height="1" fill="#A0A030"/><rect x="70" y="100" width="2" height="1" fill="#000"/><rect x="72" y="100" width="1" height="1" fill="#A0A030"/><rect x="73" y="100" width="1" height="1" fill="#000"/><rect x="74" y="100" width="1" height="1" fill="#FFFF9A"/><rect x="75" y="100" width="7" height="1" fill="#000"/><rect x="65" y="101" width="1" height="1" fill="#000"/><rect x="66" y="101" width="1" height="1" fill="#FFFF9A"/><rect x="67" y="101" width="1" height="1" fill="#000"/><rect x="68" y="101" width="1" height="1" fill="#A0A030"/><rect x="69" y="101" width="1" height="1" fill="#000"/><rect x="72" y="101" width="1" height="1" fill="#000"/><rect x="73" y="101" width="1" height="1" fill="#A0A030"/><rect x="74" y="101" width="1" height="1" fill="#000"/><rect x="75" y="101" width="6" height="1" fill="#A0A030"/><rect x="81" y="101" width="2" height="1" fill="#000"/><rect x="65" y="102" width="1" height="1" fill="#000"/><rect x="66" y="102" width="1" height="1" fill="#FFFF9A"/><rect x="67" y="102" width="1" height="1" fill="#000"/><rect x="68" y="102" width="1" height="1" fill="#A0A030"/><rect x="69" y="102" width="1" height="1" fill="#000"/><rect x="72" y="102" width="1" height="1" fill="#000"/><rect x="73" y="102" width="1" height="1" fill="#A0A030"/><rect x="74" y="102" width="8" height="1" fill="#000"/><rect x="64" y="103" width="2" height="1" fill="#000"/><rect x="66" y="103" width="1" height="1" fill="#FFFF9A"/><rect x="67" y="103" width="1" height="1" fill="#000"/><rect x="68" y="103" width="1" height="1" fill="#FFFF9A"/><rect x="69" y="103" width="1" height="1" fill="#A0A030"/><rect x="70" y="103" width="2" height="1" fill="#000"/><rect x="72" y="103" width="1" height="1" fill="#A0A030"/><rect x="73" y="103" width="1" height="1" fill="#000"/><rect x="74" y="103" width="1" height="1" fill="#FFFF9A"/><rect x="75" y="103" width="6" height="1" fill="#A0A030"/><rect x="81" y="103" width="2" height="1" fill="#000"/><rect x="63" y="104" width="1" height="1" fill="#000"/><rect x="64" y="104" width="4" height="1" fill="#FFFF9A"/><rect x="68" y="104" width="1" height="1" fill="#000"/><rect x="69" y="104" width="1" height="1" fill="#FFFF9A"/><rect x="70" y="104" width="2" height="1" fill="#A0A030"/><rect x="72" y="104" width="1" height="1" fill="#000"/><rect x="73" y="104" width="1" height="1" fill="#FFFF9A"/><rect x="74" y="104" width="7" height="1" fill="#000"/><rect x="64" y="105" width="1" height="1" fill="#000"/><rect x="65" y="105" width="4" height="1" fill="#FFFF9A"/><rect x="69" y="105" width="4" height="1" fill="#000"/><rect x="73" y="105" width="1" height="1" fill="#FFFF9A"/><rect x="74" y="105" width="6" height="1" fill="#A0A030"/><rect x="80" y="105" width="2" height="1" fill="#000"/><rect x="64" y="106" width="1" height="1" fill="#000"/><rect x="65" y="106" width="3" height="1" fill="#FFFF9A"/><rect x="68" y="106" width="1" height="1" fill="#000"/><rect x="69" y="106" width="5" height="1" fill="#FFFF9A"/><rect x="74" y="106" width="7" height="1" fill="#000"/><rect x="65" y="107" width="4" height="1" fill="#000"/><rect x="69" y="107" width="5" height="1" fill="#FFFF9A"/><rect x="74" y="107" width="1" height="1" fill="#000"/><rect x="75" y="107" width="2" height="1" fill="#A0A030"/><rect x="77" y="107" width="2" height="1" fill="#000"/><rect x="69" y="108" width="1" height="1" fill="#000"/><rect x="70" y="108" width="3" height="1" fill="#FFFF9A"/><rect x="73" y="108" width="1" height="1" fill="#A0A030"/><rect x="74" y="108" width="3" height="1" fill="#000"/><rect x="70" y="109" width="5" height="1" fill="#000"/><path d="M109 95.5l-5.5 5.5 4 0.5-6.5 6.5" fill="none" stroke="#E8C4BC" stroke-width="3.2" /><path d="M109 95.5l-5.5 5.5 4 0.5-6.5 6.5" fill="none" stroke="#F0A098" stroke-width="1.6" /><rect x="135" y="100" width="17" height="10" rx="4" ry="3" fill="#CDD0C4"/><rect x="137" y="105" width="13" height="1" fill="#C4DED8"/><rect x="137" y="107" width="13" height="1" fill="#C4DED8"/><ellipse cx="143.5" cy="103" rx="7.3" ry="2.3" fill="#C8E8E2"/><path d="M140 94h6v5h3l-6 5-6-5h3z" fill="#C4E6BC" stroke="none" stroke-width="1" /><rect x="167" y="100" width="17" height="10" rx="4" ry="3" fill="#CDD0C4"/><rect x="169" y="105" width="13" height="1" fill="#C4DED8"/><rect x="169" y="107" width="13" height="1" fill="#C4DED8"/><ellipse cx="175.5" cy="103" rx="7.3" ry="2.3" fill="#C8E8E2"/><path d="M172 104v-5h-3l6-5 6 5h-3v5z" fill="#F0C4B8" stroke="none" stroke-width="1" /><rect x="207" y="100" width="17" height="10" rx="4" ry="3" fill="#000"/><rect x="209" y="105" width="13" height="1" fill="#00A8B8"/><rect x="209" y="107" width="13" height="1" fill="#00A8B8"/><ellipse cx="215.5" cy="103" rx="7.3" ry="2.3" fill="#00F0FF"/><circle cx="219.5" cy="97" r="4.3" fill="#F0F000" stroke="#000" stroke-width="1.2"/><rect x="217" y="101" width="5" height="7" fill="#606060"/><rect x="217" y="102" width="5" height="1" fill="#fff"/><rect x="217" y="104" width="5" height="1" fill="#fff"/><rect x="217" y="106" width="5" height="1" fill="#D0D0D0"/><rect x="239" y="100" width="17" height="10" rx="4" ry="3" fill="#000"/><rect x="241" y="105" width="13" height="1" fill="#00A8B8"/><rect x="241" y="107" width="13" height="1" fill="#00A8B8"/><ellipse cx="247.5" cy="103" rx="7.3" ry="2.3" fill="#00F0FF"/><path d="M240.5 99.5v-3.5h2" fill="none" stroke="#000" stroke-width="1.3" /><path d="M242 94l2.5 2-2.5 2z" fill="#000" stroke="none" stroke-width="1" /><rect x="245" y="94" width="3" height="1" fill="#000"/><rect x="250" y="94" width="2" height="1" fill="#000"/><rect x="254" y="94" width="1" height="1" fill="#000"/><rect x="245" y="95" width="1" height="1" fill="#000"/><rect x="249" y="95" width="1" height="1" fill="#000"/><rect x="252" y="95" width="1" height="1" fill="#000"/><rect x="254" y="95" width="1" height="1" fill="#000"/><rect x="245" y="96" width="3" height="1" fill="#000"/><rect x="249" y="96" width="1" height="1" fill="#000"/><rect x="252" y="96" width="1" height="1" fill="#000"/><rect x="254" y="96" width="1" height="1" fill="#000"/><rect x="247" y="97" width="1" height="1" fill="#000"/><rect x="249" y="97" width="1" height="1" fill="#000"/><rect x="251" y="97" width="2" height="1" fill="#000"/><rect x="254" y="97" width="1" height="1" fill="#000"/><rect x="245" y="98" width="3" height="1" fill="#000"/><rect x="250" y="98" width="3" height="1" fill="#000"/><rect x="254" y="98" width="3" height="1" fill="#000"/><rect x="271" y="100" width="17" height="10" rx="4" ry="3" fill="#000"/><rect x="273" y="105" width="13" height="1" fill="#00A8B8"/><rect x="273" y="107" width="13" height="1" fill="#00A8B8"/><ellipse cx="279.5" cy="103" rx="7.3" ry="2.3" fill="#00F0FF"/><rect x="273" y="94" width="2" height="1" fill="#000"/><rect x="276" y="94" width="2" height="1" fill="#000"/><rect x="272" y="95" width="1" height="1" fill="#000"/><rect x="273" y="95" width="1" height="1" fill="#fff"/><rect x="274" y="95" width="2" height="1" fill="#000"/><rect x="276" y="95" width="1" height="1" fill="#fff"/><rect x="277" y="95" width="2" height="1" fill="#000"/><rect x="272" y="96" width="7" height="1" fill="#000"/><rect x="272" y="97" width="1" height="1" fill="#000"/><rect x="273" y="97" width="1" height="1" fill="#fff"/><rect x="274" y="97" width="3" height="1" fill="#000"/><rect x="277" y="97" width="1" height="1" fill="#fff"/><rect x="278" y="97" width="1" height="1" fill="#000"/><rect x="272" y="98" width="3" height="1" fill="#000"/><rect x="276" y="98" width="3" height="1" fill="#000"/><rect x="272" y="99" width="3" height="1" fill="#000"/><rect x="276" y="99" width="3" height="1" fill="#000"/><rect x="303" y="100" width="17" height="10" rx="4" ry="3" fill="#000"/><rect x="305" y="105" width="13" height="1" fill="#00A8B8"/><rect x="305" y="107" width="13" height="1" fill="#00A8B8"/><ellipse cx="311.5" cy="103" rx="7.3" ry="2.3" fill="#00F0FF"/><path d="M307.5 99c1-4 7-4 8.5 0" fill="none" stroke="#000080" stroke-width="1.4" /><path d="M314 98l3.5 0-1.5 2.8z" fill="#000080" stroke="none" stroke-width="1" /><path d="M306 98l5 5M311 98l-5 5" fill="none" stroke="#FF0000" stroke-width="2" /><text x="345.5" y="109.5" font-family="Liberation Sans" font-size="17" font-weight="bold" fill="#0000A0">?</text><defs><linearGradient id="pbox" x1="0" y1="0" x2="0" y2="1"><stop offset="0" stop-color="#fff"/><stop offset="0.5" stop-color="#F4F0E8"/><stop offset="1" stop-color="#C6BBA8"/></linearGradient></defs><path d="M6 7.5v11.5c0 1.4 2.6 2.3 5.8 2.3s5.8-0.9 5.8-2.3v-11.5z" fill="#B8306E"/><rect x="11" y="11.0" width="6" height="1" fill="#D05090"/><rect x="11" y="13.5" width="6" height="1" fill="#D05090"/><rect x="11" y="16.0" width="6" height="1" fill="#D05090"/><rect x="11" y="18.5" width="6" height="1" fill="#D05090"/><ellipse cx="11.8" cy="7.5" rx="5.8" ry="2.2" fill="#E890C4"/><circle cx="7" cy="17" r="5" fill="#C8C8C0" stroke="#404040" stroke-width="1.1" stroke-dasharray="1.8 1.1"/><circle cx="7" cy="17" r="3.9" fill="#EAEAE4"/><circle cx="7" cy="17" r="1.7" fill="#D04090" stroke="#808080" stroke-width="0.7"/><rect x="4" y="28" width="17" height="17" fill="#fff"/><path d="M8 31.5v11.5c0 1.4 2.6 2.3 5.8 2.3s5.8-0.9 5.8-2.3v-11.5z" fill="#B8306E"/><rect x="13" y="35.0" width="6" height="1" fill="#D05090"/><rect x="13" y="37.5" width="6" height="1" fill="#D05090"/><rect x="13" y="40.0" width="6" height="1" fill="#D05090"/><rect x="13" y="42.5" width="6" height="1" fill="#D05090"/><ellipse cx="13.8" cy="31.5" rx="5.8" ry="2.2" fill="#E890C4"/><circle cx="9" cy="41" r="5" fill="#C8C8C0" stroke="#404040" stroke-width="1.1" stroke-dasharray="1.8 1.1"/><circle cx="9" cy="41" r="3.9" fill="#EAEAE4"/><circle cx="9" cy="41" r="1.7" fill="#D04090" stroke="#808080" stroke-width="0.7"/><path d="M714.5 8.5l10 10M724.5 8.5l-10 10" fill="none" stroke="#fff" stroke-width="2.2" /><path d="M719 32l7 7M726 32l-7 7" fill="none" stroke="#555" stroke-width="2" /><rect x="142" y="130" width="8" height="1" fill="#000"/><rect x="142" y="137" width="8" height="1" fill="#000"/><rect x="142" y="130" width="1" height="8" fill="#000"/><rect x="149" y="130" width="1" height="8" fill="#000"/><rect x="157" y="129" width="5" height="6" fill="#000"/><rect x="158" y="130" width="1" height="5" fill="#fff"/><rect x="156" y="135" width="7" height="1" fill="#000"/><rect x="159" y="136" width="1" height="2" fill="#000"/><path d="M170 130l7 7M177 130l-7 7" fill="none" stroke="#000" stroke-width="1" /><rect x="142" y="332" width="8" height="1" fill="#000"/><rect x="142" y="339" width="8" height="1" fill="#000"/><rect x="142" y="332" width="1" height="8" fill="#000"/><rect x="149" y="332" width="1" height="8" fill="#000"/><rect x="157" y="331" width="5" height="6" fill="#000"/><rect x="158" y="332" width="1" height="5" fill="#fff"/><rect x="156" y="337" width="7" height="1" fill="#000"/><rect x="159" y="338" width="1" height="2" fill="#000"/><path d="M170 332l7 7M177 332l-7 7" fill="none" stroke="#000" stroke-width="1" /><path d="M16 176.2A4 4 0 1 0 13.5 183" fill="none" stroke="#000" stroke-width="2.4" /><path d="M13.5 174.5h5v5z" fill="#000" stroke="none" stroke-width="1" /><rect x="29" y="174" width="3" height="9" fill="#000"/><rect x="26" y="177" width="9" height="3" fill="#000"/><rect x="30" y="175" width="1" height="7" fill="#fff"/><rect x="27" y="178" width="7" height="1" fill="#fff"/><rect x="44" y="177" width="10" height="3" fill="#000"/><rect x="45" y="178" width="8" height="1" fill="#fff"/><rect x="62" y="173" width="2" height="1" fill="#000"/><rect x="67" y="173" width="2" height="1" fill="#000"/><rect x="62" y="174" width="2" height="1" fill="#000"/><rect x="67" y="174" width="2" height="1" fill="#000"/><rect x="61" y="175" width="4" height="1" fill="#000"/><rect x="66" y="175" width="4" height="1" fill="#000"/><rect x="61" y="176" width="1" height="1" fill="#000"/><rect x="62" y="176" width="1" height="1" fill="#fff"/><rect x="63" y="176" width="4" height="1" fill="#000"/><rect x="67" y="176" width="1" height="1" fill="#fff"/><rect x="68" y="176" width="2" height="1" fill="#000"/><rect x="60" y="177" width="11" height="1" fill="#000"/><rect x="60" y="178" width="1" height="1" fill="#000"/><rect x="61" y="178" width="1" height="1" fill="#fff"/><rect x="62" y="178" width="6" height="1" fill="#000"/><rect x="68" y="178" width="1" height="1" fill="#fff"/><rect x="69" y="178" width="2" height="1" fill="#000"/><rect x="60" y="179" width="5" height="1" fill="#000"/><rect x="66" y="179" width="5" height="1" fill="#000"/><rect x="60" y="180" width="5" height="1" fill="#000"/><rect x="66" y="180" width="5" height="1" fill="#000"/><rect x="60" y="181" width="1" height="1" fill="#000"/><rect x="61" y="181" width="1" height="1" fill="#fff"/><rect x="62" y="181" width="2" height="1" fill="#000"/><rect x="67" y="181" width="1" height="1" fill="#000"/><rect x="68" y="181" width="1" height="1" fill="#fff"/><rect x="69" y="181" width="2" height="1" fill="#000"/><rect x="60" y="182" width="4" height="1" fill="#000"/><rect x="67" y="182" width="4" height="1" fill="#000"/><rect x="60" y="183" width="4" height="1" fill="#000"/><rect x="67" y="183" width="4" height="1" fill="#000"/><path d="M80.5 183.5l6.5-6.5" fill="none" stroke="#000" stroke-width="2.8" /><path d="M81 183l6-6" fill="none" stroke="#fff" stroke-width="0.9" /><circle cx="88.3" cy="175.7" r="2.1" fill="#fff" stroke="#000" stroke-width="1.3"/><path d="M84.5 179.5h8l-3 3.5v3h-2v-3z" fill="#808080" stroke="#000" stroke-width="1" /><path d="M98.5 183.5l6.5-6.5" fill="none" stroke="#000" stroke-width="2.8" /><path d="M99 183l6-6" fill="none" stroke="#fff" stroke-width="0.9" /><circle cx="106.3" cy="175.7" r="2.1" fill="#fff" stroke="#000" stroke-width="1.3"/><rect x="102" y="180" width="9" height="6" fill="#000"/><rect x="103" y="182" width="7" height="3" fill="#A0A0A0"/><rect x="102" y="179" width="4" height="1" fill="#000"/><path d="M169 198l4 4 4-4" fill="none" stroke="#4D6185" stroke-width="2.3" /><path d="M169 221l4 4 4-4" fill="none" stroke="#4D6185" stroke-width="2.3" /><clipPath id="treeclip"><rect x="3" y="262" width="162" height="59"/></clipPath><g clip-path="url(#treeclip)"><rect x="11.5" y="267.5" width="8" height="8" fill="url(#pbox)" stroke="#7B9EBD" stroke-width="1" rx="1"/><rect x="13" y="271" width="5" height="1" fill="#000"/><rect x="15" y="269" width="1" height="5" fill="#000"/><rect x="21" y="271" width="1" height="1" fill="#A0A0A0"/><rect x="23" y="271" width="1" height="1" fill="#A0A0A0"/><rect x="25" y="271" width="1" height="1" fill="#A0A0A0"/><rect x="15" y="277" width="1" height="1" fill="#A0A0A0"/><rect x="15" y="279" width="1" height="1" fill="#A0A0A0"/><rect x="15" y="281" width="1" height="1" fill="#A0A0A0"/><path d="M27.5 277.5V266.5l1.5-2h4l1.5 2h6.5v11z" fill="#C8C880" stroke="#808080" stroke-width="1" /><rect x="28" y="267" width="13" height="1" fill="#fff"/><rect x="28" y="267" width="1" height="10" fill="#fff"/><rect x="42" y="266" width="1" height="12" fill="#000"/><rect x="28" y="278" width="15" height="1" fill="#000"/><rect x="11.5" y="283.5" width="8" height="8" fill="url(#pbox)" stroke="#7B9EBD" stroke-width="1" rx="1"/><rect x="13" y="287" width="5" height="1" fill="#000"/><rect x="15" y="285" width="1" height="5" fill="#000"/><rect x="21" y="287" width="1" height="1" fill="#A0A0A0"/><rect x="23" y="287" width="1" height="1" fill="#A0A0A0"/><rect x="25" y="287" width="1" height="1" fill="#A0A0A0"/><rect x="15" y="293" width="1" height="1" fill="#A0A0A0"/><rect x="15" y="295" width="1" height="1" fill="#A0A0A0"/><rect x="15" y="297" width="1" height="1" fill="#A0A0A0"/><path d="M27.5 293.5V282.5l1.5-2h4l1.5 2h6.5v11z" fill="#C8C880" stroke="#808080" stroke-width="1" /><rect x="28" y="283" width="13" height="1" fill="#fff"/><rect x="28" y="283" width="1" height="10" fill="#fff"/><rect x="42" y="282" width="1" height="12" fill="#000"/><rect x="28" y="294" width="15" height="1" fill="#000"/><rect x="11.5" y="299.5" width="8" height="8" fill="url(#pbox)" stroke="#7B9EBD" stroke-width="1" rx="1"/><rect x="13" y="303" width="5" height="1" fill="#000"/><rect x="15" y="301" width="1" height="5" fill="#000"/><rect x="21" y="303" width="1" height="1" fill="#A0A0A0"/><rect x="23" y="303" width="1" height="1" fill="#A0A0A0"/><rect x="25" y="303" width="1" height="1" fill="#A0A0A0"/><rect x="15" y="309" width="1" height="1" fill="#A0A0A0"/><rect x="15" y="311" width="1" height="1" fill="#A0A0A0"/><rect x="15" y="313" width="1" height="1" fill="#A0A0A0"/><path d="M27.5 309.5V298.5l1.5-2h4l1.5 2h6.5v11z" fill="#C8C880" stroke="#808080" stroke-width="1" /><rect x="28" y="299" width="13" height="1" fill="#fff"/><rect x="28" y="299" width="1" height="10" fill="#fff"/><rect x="42" y="298" width="1" height="12" fill="#000"/><rect x="28" y="310" width="15" height="1" fill="#000"/><rect x="11.5" y="315.5" width="8" height="8" fill="url(#pbox)" stroke="#7B9EBD" stroke-width="1" rx="1"/><rect x="13" y="319" width="5" height="1" fill="#000"/><rect x="15" y="317" width="1" height="5" fill="#000"/><rect x="21" y="319" width="1" height="1" fill="#A0A0A0"/><rect x="23" y="319" width="1" height="1" fill="#A0A0A0"/><rect x="25" y="319" width="1" height="1" fill="#A0A0A0"/><path d="M27.5 325.5V314.5l1.5-2h4l1.5 2h6.5v11z" fill="#C8C880" stroke="#808080" stroke-width="1" /><rect x="28" y="315" width="13" height="1" fill="#fff"/><rect x="28" y="315" width="1" height="10" fill="#fff"/><rect x="42" y="314" width="1" height="12" fill="#000"/><rect x="28" y="326" width="15" height="1" fill="#000"/></g><path d="M168.5 273l4-4 4 4" fill="none" stroke="#4D6185" stroke-width="2.3" /><path d="M168.5 309l4 4 4-4" fill="none" stroke="#4D6185" stroke-width="2.3" /><rect x="5" y="374" width="10" height="4" fill="#0000FF"/><rect x="5" y="382" width="10" height="4" fill="#000"/><path d="M712.5 158.5l5 5h-2.5v4h-5v-4h-2.5z" fill="#00C0C0" stroke="#000" stroke-width="1" /><path d="M712.5 195.5l5-5h-2.5v-4h-5v4h-2.5z" fill="#00C0C0" stroke="#000" stroke-width="1" /><rect x="236" y="259" width="1" height="26" fill="#ACA899"/><rect x="237" y="259" width="1" height="26" fill="#fff"/><rect x="346" y="259" width="1" height="26" fill="#ACA899"/><rect x="347" y="259" width="1" height="26" fill="#fff"/><rect x="457" y="259" width="1" height="26" fill="#ACA899"/><rect x="458" y="259" width="1" height="26" fill="#fff"/><rect x="541" y="259" width="1" height="26" fill="#ACA899"/><rect x="542" y="259" width="1" height="26" fill="#fff"/><rect x="574" y="259" width="1" height="26" fill="#ACA899"/><rect x="575" y="259" width="1" height="26" fill="#fff"/><rect x="606" y="259" width="1" height="26" fill="#ACA899"/><rect x="607" y="259" width="1" height="26" fill="#fff"/><rect x="200" y="263" width="15" height="15" fill="#000"/><rect x="201" y="264" width="6" height="6" fill="#C8C4B4"/><rect x="201" y="264" width="5" height="5" fill="#fff"/><rect x="202" y="265" width="4" height="4" fill="#ECE9D8"/><rect x="208" y="264" width="6" height="6" fill="#C8C4B4"/><rect x="208" y="264" width="5" height="5" fill="#fff"/><rect x="209" y="265" width="4" height="4" fill="#ECE9D8"/><rect x="201" y="271" width="6" height="6" fill="#C8C4B4"/><rect x="201" y="271" width="5" height="5" fill="#fff"/><rect x="202" y="272" width="4" height="4" fill="#ECE9D8"/><rect x="208" y="271" width="6" height="6" fill="#C8C4B4"/><rect x="208" y="271" width="5" height="5" fill="#fff"/><rect x="209" y="272" width="4" height="4" fill="#ECE9D8"/><path d="M217.5 264v13" fill="none" stroke="#0000E0" stroke-width="1.2" /><path d="M215.5 266l2-3 2 3zM215.5 275l2 3 2-3z" fill="#0000E0" stroke="none" stroke-width="1" /><rect x="215" y="270" width="4" height="1" fill="#E00000"/><path d="M201 280.5h13" fill="none" stroke="#0000E0" stroke-width="1.2" /><path d="M203 278.5l-3 2 3 2zM212 278.5l3 2-3 2z" fill="#0000E0" stroke="none" stroke-width="1" /><rect x="207" y="278" width="1" height="4" fill="#E00000"/><path d="M224 271h7l-3.5 4z" fill="#000" stroke="none" stroke-width="1" /><path d="M250.5 271v-2.5a3.5 3.5 0 0 1 7 0v2.5" fill="none" stroke="#000" stroke-width="1.6" /><rect x="247" y="270" width="14" height="10" rx="3" fill="#000"/><rect x="248" y="271" width="12" height="8" fill="#B8B8B8"/><rect x="248" y="273" width="12" height="1" fill="#707070"/><rect x="248" y="276" width="12" height="1" fill="#707070"/><rect x="249" y="278" width="10" height="1" fill="#B8B8B8"/><rect x="253" y="272" width="2" height="5" fill="#000"/><rect x="275" y="271" width="9" height="2" fill="#B8B8CC"/><rect x="278" y="268" width="2" height="9" fill="#B8B8CC"/><rect x="301" y="271" width="9" height="2" fill="#B8B8CC"/><path d="M324 273l4 4 10-11" fill="none" stroke="#C6DEBA" stroke-width="2.6" /><path d="M357 265h13l-6.5 5z" fill="#00E000" stroke="#000" stroke-width="1" /><path d="M357 270h13l-6.5 6z" fill="#00E000" stroke="#000" stroke-width="1" /><path d="M383 265h13l-6.5 5z" fill="#00E000" stroke="#000" stroke-width="1" /><path d="M383 270h13l-6.5 6z" fill="#00E000" stroke="#000" stroke-width="1" /><rect x="383" y="277" width="13" height="1" fill="#000"/><rect x="412" y="265" width="3" height="1" fill="#000"/><rect x="418" y="265" width="3" height="1" fill="#000"/><rect x="412" y="266" width="1" height="1" fill="#000"/><rect x="413" y="266" width="1" height="1" fill="#fff"/><rect x="414" y="266" width="1" height="1" fill="#000"/><rect x="418" y="266" width="1" height="1" fill="#000"/><rect x="419" y="266" width="1" height="1" fill="#fff"/><rect x="420" y="266" width="1" height="1" fill="#000"/><rect x="412" y="267" width="3" height="1" fill="#000"/><rect x="418" y="267" width="3" height="1" fill="#000"/><rect x="411" y="268" width="5" height="1" fill="#000"/><rect x="417" y="268" width="5" height="1" fill="#000"/><rect x="411" y="269" width="1" height="1" fill="#000"/><rect x="412" y="269" width="1" height="1" fill="#fff"/><rect x="413" y="269" width="5" height="1" fill="#000"/><rect x="418" y="269" width="1" height="1" fill="#fff"/><rect x="419" y="269" width="3" height="1" fill="#000"/><rect x="410" y="270" width="13" height="1" fill="#000"/><rect x="409" y="271" width="2" height="1" fill="#000"/><rect x="411" y="271" width="1" height="1" fill="#fff"/><rect x="412" y="271" width="3" height="1" fill="#000"/><rect x="415" y="271" width="1" height="1" fill="#888"/><rect x="416" y="271" width="2" height="1" fill="#000"/><rect x="418" y="271" width="1" height="1" fill="#fff"/><rect x="419" y="271" width="5" height="1" fill="#000"/><rect x="409" y="272" width="2" height="1" fill="#000"/><rect x="411" y="272" width="1" height="1" fill="#fff"/><rect x="412" y="272" width="3" height="1" fill="#000"/><rect x="415" y="272" width="1" height="1" fill="#888"/><rect x="416" y="272" width="2" height="1" fill="#000"/><rect x="418" y="272" width="1" height="1" fill="#fff"/><rect x="419" y="272" width="5" height="1" fill="#000"/><rect x="409" y="273" width="15" height="1" fill="#000"/><rect x="409" y="274" width="6" height="1" fill="#000"/><rect x="418" y="274" width="6" height="1" fill="#000"/><rect x="409" y="275" width="1" height="1" fill="#000"/><rect x="410" y="275" width="1" height="1" fill="#fff"/><rect x="411" y="275" width="3" height="1" fill="#000"/><rect x="419" y="275" width="1" height="1" fill="#000"/><rect x="420" y="275" width="1" height="1" fill="#fff"/><rect x="421" y="275" width="3" height="1" fill="#000"/><rect x="409" y="276" width="1" height="1" fill="#000"/><rect x="410" y="276" width="1" height="1" fill="#fff"/><rect x="411" y="276" width="3" height="1" fill="#000"/><rect x="419" y="276" width="1" height="1" fill="#000"/><rect x="420" y="276" width="1" height="1" fill="#fff"/><rect x="421" y="276" width="3" height="1" fill="#000"/><rect x="409" y="277" width="5" height="1" fill="#000"/><rect x="419" y="277" width="5" height="1" fill="#000"/><path d="M438.5 270.5l8-8 6 4.5-8.5 8.5z" fill="#ECF0C8" stroke="#D8D4C4" stroke-width="1" /><path d="M438.5 270.5l3.5-3.5 6 4.5-3.5 3.5z" fill="#F2B4C6" stroke="#E0C4C8" stroke-width="1" /><path d="M466.0 269l6-3 6 3-6 3z" fill="#fff" stroke="#000" stroke-width="0.8" /><path d="M466.5 271l6-3 6 3-6 3z" fill="#fff" stroke="#000" stroke-width="0.8" /><path d="M467.0 273l6-3 6 3-6 3z" fill="#fff" stroke="#000" stroke-width="0.8" /><path d="M469 267l4-2 3 3-4 2z" fill="#FFFF60" stroke="#000" stroke-width="0.6" /><rect x="474" y="270" width="8" height="9" fill="#000"/><rect x="475" y="271" width="6" height="7" fill="#fff"/><rect x="476" y="273" width="4" height="1" fill="#000"/><rect x="476" y="275" width="4" height="1" fill="#000"/><path d="M493.5 268.5h12l-6 6z" fill="#F4F2DC" stroke="#C0BCA8" stroke-width="1" /><path d="M519.5 275.5h12l-6-6z" fill="#F4F2DC" stroke="#C0BCA8" stroke-width="1" /><rect x="564.5" y="264.5" width="4" height="2" fill="#fff" stroke="#2020C0" stroke-width="1"/><rect x="559.5" y="267.5" width="4" height="2" fill="#fff" stroke="#2020C0" stroke-width="1"/><rect x="564.5" y="271.5" width="4" height="2" fill="#fff" stroke="#2020C0" stroke-width="1"/><rect x="549.5" y="271.5" width="4" height="2" fill="#fff" stroke="#2020C0" stroke-width="1"/><rect x="556.5" y="271.5" width="4" height="2" fill="#fff" stroke="#2020C0" stroke-width="1"/><rect x="556.5" y="275.5" width="4" height="2" fill="#fff" stroke="#2020C0" stroke-width="1"/><rect x="564.5" y="275.5" width="4" height="2" fill="#fff" stroke="#2020C0" stroke-width="1"/><rect x="557" y="272" width="3" height="1" fill="#F0F000"/><rect x="554" y="272" width="2" height="1" fill="#2020C0"/><rect x="561" y="268" width="3" height="1" fill="#2020C0"/><rect x="562" y="272" width="2" height="1" fill="#2020C0"/><rect x="584" y="265" width="14" height="14" fill="#000"/><rect x="585" y="266" width="2" height="12" fill="#C8C830"/><rect x="595" y="266" width="2" height="12" fill="#C8C830"/><rect x="587" y="266" width="8" height="6" fill="#D8D0D0"/><rect x="587" y="272" width="8" height="1" fill="#C8C830"/><rect x="593" y="275" width="2" height="3" fill="#fff"/><ellipse cx="624" cy="277" rx="8" ry="3" fill="#000"/><ellipse cx="624" cy="276.3" rx="7" ry="2" fill="#00B0C0"/><ellipse cx="624" cy="275" rx="8" ry="3" fill="#000"/><ellipse cx="624" cy="274.3" rx="7" ry="2" fill="#00B0C0"/><ellipse cx="624" cy="273" rx="8" ry="3" fill="#000"/><ellipse cx="624" cy="272.3" rx="7" ry="2" fill="#00B0C0"/><ellipse cx="624" cy="272" rx="8" ry="3.2" fill="#000"/><ellipse cx="624" cy="272" rx="7" ry="2.4" fill="#00E8F8"/><rect x="621" y="264" width="12" height="5" fill="#000"/><rect x="622" y="265" width="10" height="3" fill="#fff"/><rect x="623" y="266" width="5" height="1" fill="#E00000"/><path d="M616.5 270v-3h2" fill="none" stroke="#000" stroke-width="1.2" /><rect x="644" y="264" width="1" height="15" fill="#000"/><rect x="644" y="278" width="15" height="1" fill="#000"/><rect x="645" y="271" width="4" height="7" fill="#0000E0"/><rect x="649" y="266" width="4" height="12" fill="#F0F000"/><rect x="653" y="268" width="4" height="10" fill="#E00000"/><rect x="645" y="271" width="1" height="7" fill="#000"/><rect x="649" y="266" width="1" height="12" fill="#000"/><rect x="653" y="268" width="1" height="10" fill="#000"/><rect x="657" y="268" width="1" height="10" fill="#000"/><path d="M666 271h7l-3.5 4z" fill="#000" stroke="none" stroke-width="1" /><path d="M200 312l6 5.5-6 5.5z" fill="#000" stroke="none" stroke-width="1" /><path d="M211 451.5h4.5A4.3 4.3 0 1 0 220.8 455" fill="none" stroke="#000" stroke-width="2.2" /><path d="M218 450v5.5l4-2.75z" fill="#FF0000" stroke="none" stroke-width="1" /><rect x="688" y="472" width="8" height="1" fill="#000"/><rect x="688" y="479" width="8" height="1" fill="#000"/><rect x="688" y="472" width="1" height="8" fill="#000"/><rect x="695" y="472" width="1" height="8" fill="#000"/><rect x="703" y="471" width="5" height="6" fill="#000"/><rect x="704" y="472" width="1" height="5" fill="#fff"/><rect x="702" y="477" width="7" height="1" fill="#000"/><rect x="705" y="478" width="1" height="2" fill="#000"/><path d="M716 472l7 7M723 472l-7 7" fill="none" stroke="#000" stroke-width="1" /><rect x="687" y="471" width="10" height="10" fill="#ECE9D8"/><path d="M195.5 498l4 4 4-4" fill="none" stroke="#4D6185" stroke-width="2.3" /><rect x="221" y="495" width="2" height="1" fill="#000"/><rect x="226" y="495" width="2" height="1" fill="#000"/><rect x="221" y="496" width="2" height="1" fill="#000"/><rect x="226" y="496" width="2" height="1" fill="#000"/><rect x="220" y="497" width="4" height="1" fill="#000"/><rect x="225" y="497" width="4" height="1" fill="#000"/><rect x="220" y="498" width="1" height="1" fill="#000"/><rect x="221" y="498" width="1" height="1" fill="#fff"/><rect x="222" y="498" width="4" height="1" fill="#000"/><rect x="226" y="498" width="1" height="1" fill="#fff"/><rect x="227" y="498" width="2" height="1" fill="#000"/><rect x="219" y="499" width="11" height="1" fill="#000"/><rect x="219" y="500" width="1" height="1" fill="#000"/><rect x="220" y="500" width="1" height="1" fill="#fff"/><rect x="221" y="500" width="6" height="1" fill="#000"/><rect x="227" y="500" width="1" height="1" fill="#fff"/><rect x="228" y="500" width="2" height="1" fill="#000"/><rect x="219" y="501" width="5" height="1" fill="#000"/><rect x="225" y="501" width="5" height="1" fill="#000"/><rect x="219" y="502" width="5" height="1" fill="#000"/><rect x="225" y="502" width="5" height="1" fill="#000"/><rect x="219" y="503" width="1" height="1" fill="#000"/><rect x="220" y="503" width="1" height="1" fill="#fff"/><rect x="221" y="503" width="2" height="1" fill="#000"/><rect x="226" y="503" width="1" height="1" fill="#000"/><rect x="227" y="503" width="1" height="1" fill="#fff"/><rect x="228" y="503" width="2" height="1" fill="#000"/><rect x="219" y="504" width="4" height="1" fill="#000"/><rect x="226" y="504" width="4" height="1" fill="#000"/><rect x="219" y="505" width="4" height="1" fill="#000"/><rect x="226" y="505" width="4" height="1" fill="#000"/><path d="M245 497.5h13l-6.5 6.5z" fill="#FFFF80" stroke="#000" stroke-width="1" /><path d="M268 504.5h13l-6.5-6.5z" fill="#FFFF80" stroke="#000" stroke-width="1" /><rect x="292" y="496" width="3" height="1" fill="#000"/><rect x="296" y="496" width="3" height="1" fill="#000"/><rect x="300" y="496" width="3" height="1" fill="#000"/><rect x="292" y="498" width="3" height="1" fill="#000"/><rect x="297" y="498" width="3" height="1" fill="#000"/><rect x="301" y="498" width="3" height="1" fill="#000"/><rect x="292" y="500" width="3" height="1" fill="#000"/><rect x="296" y="500" width="3" height="1" fill="#000"/><rect x="300" y="500" width="3" height="1" fill="#000"/><rect x="292" y="502" width="3" height="1" fill="#000"/><rect x="297" y="502" width="3" height="1" fill="#000"/><rect x="301" y="502" width="3" height="1" fill="#000"/><rect x="292" y="504" width="3" height="1" fill="#000"/><rect x="296" y="504" width="3" height="1" fill="#000"/><rect x="300" y="504" width="3" height="1" fill="#000"/><path d="M314.5 504.5l7-7c1-1 3-1 4 0l2 1-8 8h-3.5z" fill="#fff" stroke="#000" stroke-width="1.1" /><path d="M319 506l-3-3" fill="none" stroke="#000" stroke-width="1" /><rect x="347" y="496" width="12" height="10" fill="#000"/><rect x="348" y="497" width="10" height="1" fill="#4040FF"/><rect x="348" y="498" width="10" height="7" fill="#fff"/><rect x="350" y="500" width="5" height="1" fill="#000"/><rect x="350" y="502" width="3" height="1" fill="#000"/><rect x="355" y="502" width="2" height="1" fill="#000"/><text x="370" y="504" font-family="Liberation Sans" font-size="10" fill="#000" letter-spacing="-0.3">ABC</text><rect x="396" y="495" width="13" height="10" fill="#000"/><text x="396.5" y="504" font-family="Liberation Sans" font-size="10" fill="#fff" letter-spacing="-0.5">Ab</text><text x="408" y="504" font-family="Liberation Sans" font-size="8" fill="#000">c</text><text x="422" y="504" font-family="Liberation Sans" font-size="10" fill="#000" letter-spacing="-0.3">"AB"</text></svg>
</body></html>
